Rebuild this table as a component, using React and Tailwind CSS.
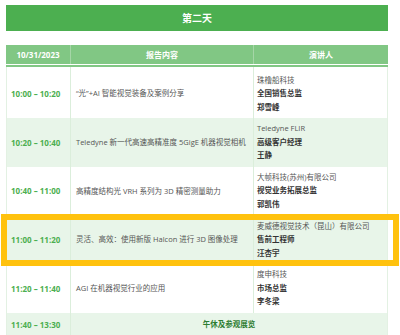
import React from "react";

const rows = [
  {
    time: "10:00 – 10:20",
    topic: "“光”+AI 智能视觉装备及案例分享",
    company: "珠橹船科技",
    title: "全国销售总监",
    name: "郑雪峰",
  },
  {
    time: "10:20 – 10:40",
    topic: "Teledyne 新一代高速高精准度 5GigE 机器视觉相机",
    company: "Teledyne FLIR",
    title: "高级客户经理",
    name: "王静",
  },
  {
    time: "10:40 – 11:00",
    topic: "高精度结构光 VRH 系列为 3D 精密测量助力",
    company: "大帧科技(苏州)有限公司",
    title: "视觉业务拓展总监",
    name: "郭凯伟",
  },
  {
    time: "11:00 – 11:20",
    topic: "灵活、高效：使用新版 Halcon 进行 3D 图像处理",
    company: "麦威德视觉技术（昆山）有限公司",
    title: "售前工程师",
    name: "汪杏宇",
  },
  {
    time: "11:20 – 11:40",
    topic: "AGI 在机器视觉行业的应用",
    company: "度申科技",
    title: "市场总监",
    name: "李冬梁",
  },
];

export default function App() {
  return (
    <div
      className="relative w-[400px] h-[335px] overflow-hidden bg-white"
      style={{ fontFamily: '"Open Sans", "Noto Sans CJK SC", sans-serif' }}
    >
      <div className="pt-[5px] pl-[6px] w-[388px]">
        <div className="h-[26px] bg-[#4caf50] flex items-center justify-center text-white font-bold text-[10px]">
          第二天
        </div>
        <div className="h-[14px]" />
        <div className="grid grid-cols-[65px_183px_134px] h-[19px] bg-[#81c784] text-white font-bold text-[8px]">
          <div className="flex items-center justify-center border-r border-[#a5d6a7]">10/31/2023</div>
          <div className="flex items-center justify-center border-r border-[#a5d6a7]">报告内容</div>
          <div className="flex items-center justify-center">演讲人</div>
        </div>
        <div className="h-[1px] bg-white" />
        <div className="h-[2px] bg-[#81c784]" />
        <div className="border-x border-[#e3f1e3]">
          <div className="grid grid-cols-[64px_183px_133px] h-[2.5px]">
            <div className="border-r border-[#dbeedb]" />
            <div className="border-r border-[#dbeedb]" />
            <div />
          </div>
          {rows.map((r, i) => (
            <div
              key={i}
              className={
                "grid grid-cols-[64px_183px_133px] h-[48.7px] " +
                (i % 2 === 1 ? "bg-[#e8f5e9]" : "bg-white")
              }
            >
              <div className="flex items-center pl-[4px] border-r border-[#dbeedb] text-[#4caf50] font-bold text-[8px] whitespace-nowrap">
                {r.time}
              </div>
              <div className="flex items-center pl-[5px] border-r border-[#dbeedb] text-[#555] text-[7.5px] whitespace-nowrap">
                {r.topic}
              </div>
              <div className="flex flex-col justify-center pl-[3px] text-[7.5px] leading-[13.5px] whitespace-nowrap">
                <div className="text-[#555]">{r.company}</div>
                <div className="text-[#333] font-bold">{r.title}</div>
                <div className="text-[#333] font-bold">{r.name}</div>
              </div>
            </div>
          ))}
          <div className="grid grid-cols-[64px_316px] h-[24px] bg-[#e8f5e9]">
            <div className="flex items-center pl-[4px] border-r border-[#dbeedb] text-[#4caf50] font-bold text-[8px] whitespace-nowrap">
              11:40 – 13:30
            </div>
            <div className="flex items-center justify-center text-[#2e7d32] font-bold text-[7.5px]">
              午休及参观展览
            </div>
          </div>
        </div>
      </div>
      <div className="absolute left-[1px] top-[214px] w-[398px] h-[52px] border-[6px] border-[#ffc20e]" />
    </div>
  );
}
